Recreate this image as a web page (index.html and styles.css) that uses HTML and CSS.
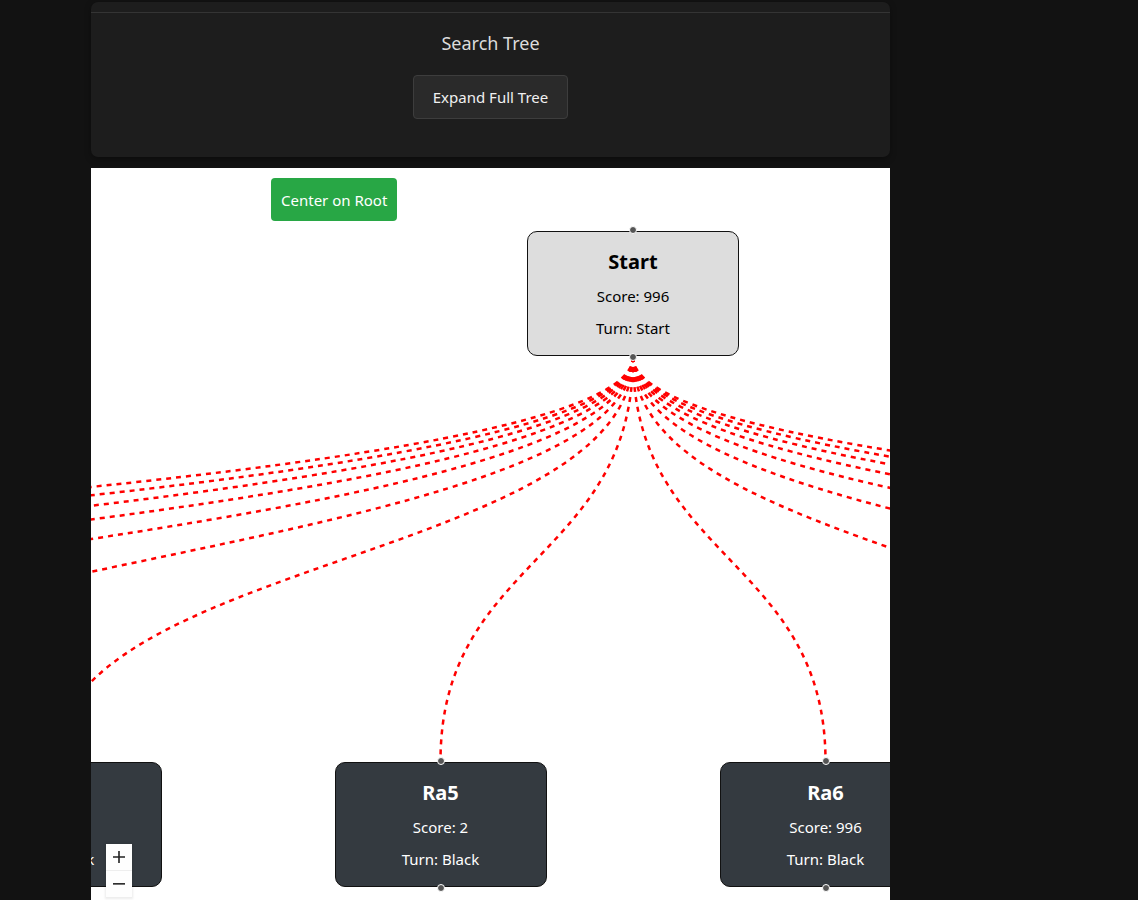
FILE: index.html
```html
<!DOCTYPE html>
<html lang="en">
<head>
<meta charset="utf-8">
<title>Search Tree</title>
<link rel="stylesheet" href="styles.css">
</head>
<body>
<div class="app">
  <section class="panel">
    <div class="panel-rule"></div>
    <h2 class="panel-title">Search Tree</h2>
    <button class="btn-expand" type="button">Expand Full Tree</button>
  </section>

  <div class="flow">
    <svg class="edges" width="799" height="745" viewBox="0 0 799 745">
      <g class="edge-group">
        <path d="M542,189 C542,391 -2345.5,391 -2345.5,593"/>
        <path d="M542,189 C542,391 -1960.5,391 -1960.5,593"/>
        <path d="M542,189 C542,391 -1575.5,391 -1575.5,593"/>
        <path d="M542,189 C542,391 -1190.5,391 -1190.5,593"/>
        <path d="M542,189 C542,391 -805.5,391 -805.5,593"/>
        <path d="M542,189 C542,391 -420.5,391 -420.5,593"/>
        <path d="M542,189 C542,391 -35.5,391 -35.5,593"/>
        <path d="M542,189 C542,391 349.5,391 349.5,593"/>
        <path d="M542,189 C542,391 734.5,391 734.5,593"/>
        <path d="M542,189 C542,391 1119.5,391 1119.5,593"/>
        <path d="M542,189 C542,391 1504.5,391 1504.5,593"/>
        <path d="M542,189 C542,391 1889.5,391 1889.5,593"/>
        <path d="M542,189 C542,391 2274.5,391 2274.5,593"/>
        <path d="M542,189 C542,391 2659.5,391 2659.5,593"/>
        <path d="M542,189 C542,391 3044.5,391 3044.5,593"/>
        <path d="M542,189 C542,391 3429.5,391 3429.5,593"/>
      </g>
    </svg>

    <div class="node node-root" style="left:436px; top:63px;">
      <span class="handle handle-top"></span>
      <div class="node-title">Start</div>
      <div class="node-line">Score: 996</div>
      <div class="node-line">Turn: Start</div>
      <span class="handle handle-bottom"></span>
    </div>

    <div class="node node-dark" style="left:-141.5px; top:594px;">
      <span class="handle handle-top"></span>
      <div class="node-title">Ra4</div>
      <div class="node-line">Score: 2</div>
      <div class="node-line">Turn: Black</div>
      <span class="handle handle-bottom"></span>
    </div>

    <div class="node node-dark" style="left:243.5px; top:594px;">
      <span class="handle handle-top"></span>
      <div class="node-title">Ra5</div>
      <div class="node-line">Score: 2</div>
      <div class="node-line">Turn: Black</div>
      <span class="handle handle-bottom"></span>
    </div>

    <div class="node node-dark" style="left:628.5px; top:594px;">
      <span class="handle handle-top"></span>
      <div class="node-title">Ra6</div>
      <div class="node-line">Score: 996</div>
      <div class="node-line">Turn: Black</div>
      <span class="handle handle-bottom"></span>
    </div>

    <button class="btn-center" type="button">Center on Root</button>

    <div class="controls">
      <button class="ctrl-btn" type="button" aria-label="zoom in">
        <svg viewBox="0 0 32 32" width="12" height="12"><path d="M32 18.133H18.133V32h-4.266V18.133H0v-4.266h13.867V0h4.266v13.867H32z"/></svg>
      </button>
      <button class="ctrl-btn" type="button" aria-label="zoom out">
        <svg viewBox="0 0 32 5" width="12" height="12"><path d="M0 0h32v4.2H0z"/></svg>
      </button>
    </div>
  </div>
</div>
</body>
</html>
```

FILE: styles.css
```css
* { box-sizing: border-box; }

html, body {
  margin: 0;
  padding: 0;
  background: #121212;
  height: 100%;
  overflow: hidden;
}

body {
  font-family: "Noto Sans", "Open Sans", sans-serif;
}

.app {
  width: 799px;
  margin-left: 91px;
  padding-top: 2px;
  display: flex;
  flex-direction: column;
  gap: 11px;
}

.panel {
  background: #1d1d1d;
  border-radius: 7px;
  padding: 10px 0 38px;
  display: flex;
  flex-direction: column;
  align-items: center;
  box-shadow: 0 2px 6px rgba(0, 0, 0, 0.35);
}

.panel-rule {
  align-self: stretch;
  height: 1px;
  background: #343434;
}

.panel-title {
  margin: 18px 0 0;
  font-size: 18px;
  line-height: 24px;
  font-weight: 400;
  color: #dcdcdc;
}

.btn-expand {
  margin-top: 20px;
  height: 44px;
  padding: 0 19px;
  background: #2a2a2a;
  color: #f0f0f0;
  border: 1px solid #3d3d3d;
  border-radius: 4px;
  font-family: inherit;
  font-size: 15px;
}

.flow {
  position: relative;
  height: 745px;
  background: #ffffff;
  overflow: hidden;
}

.edges {
  position: absolute;
  left: 0;
  top: 0;
  overflow: visible;
}

.edge-group path {
  fill: none;
  stroke: #ff0000;
  stroke-width: 2.5;
  stroke-dasharray: 5;
}

.node {
  position: absolute;
  width: 212px;
  height: 125px;
  padding-top: 12px;
  border: 1px solid #111;
  border-radius: 10px;
  text-align: center;
  display: flex;
  flex-direction: column;
}

.node-root {
  background: #dddddd;
  color: #000;
}

.node-dark {
  background: #343a40;
  color: #fff;
}

.node-title {
  font-size: 20px;
  font-weight: 700;
  line-height: 36px;
}

.node-line {
  font-size: 15px;
  line-height: 32px;
}

.handle {
  position: absolute;
  left: 50%;
  width: 8px;
  height: 8px;
  margin-left: -4px;
  border-radius: 50%;
  background: #555;
  border: 1px solid #fff;
}

.handle-top { top: -6px; }
.handle-bottom { bottom: -6px; }

.btn-center {
  position: absolute;
  left: 180px;
  top: 10px;
  height: 43px;
  padding: 0 10px;
  background: #28a745;
  color: #fff;
  border: none;
  border-radius: 4px;
  font-family: inherit;
  font-size: 15px;
}

.controls {
  position: absolute;
  left: 15px;
  bottom: 15px;
  display: flex;
  flex-direction: column;
  box-shadow: 0 0 2px 1px rgba(0, 0, 0, 0.08);
}

.ctrl-btn {
  width: 26px;
  height: 27px;
  padding: 5px;
  background: #fefefe;
  border: none;
  border-bottom: 1px solid #eee;
  display: flex;
  align-items: center;
  justify-content: center;
}

.ctrl-btn svg {
  fill: #222;
}
```
